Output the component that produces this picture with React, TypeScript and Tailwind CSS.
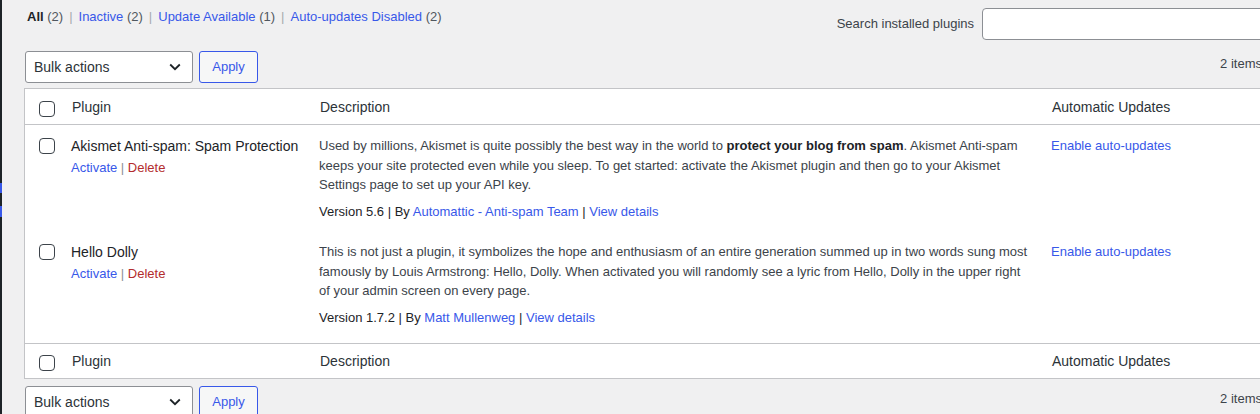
import React from 'react';

const FILTERS = [
  { label: 'All', count: 2, current: true },
  { label: 'Inactive', count: 2 },
  { label: 'Update Available', count: 1 },
  { label: 'Auto-updates Disabled', count: 2 },
];

const PLUGINS = [
  {
    name: 'Akismet Anti-spam: Spam Protection',
    version: '5.6',
    author: 'Automattic - Anti-spam Team',
    height: 'h-[106px]',
    lines: [
      <>
        Used by millions, Akismet is quite possibly the best way in the world to{' '}
        <strong className="font-bold text-[#1d2327]">protect your blog from spam</strong>. Akismet Anti-spam
      </>,
      <>keeps your site protected even while you sleep. To get started: activate the Akismet plugin and then go to your Akismet</>,
      <>Settings page to set up your API key.</>,
    ],
  },
  {
    name: 'Hello Dolly',
    version: '1.7.2',
    author: 'Matt Mullenweg',
    height: 'h-[112px]',
    lines: [
      <>This is not just a plugin, it symbolizes the hope and enthusiasm of an entire generation summed up in two words sung most</>,
      <>famously by Louis Armstrong: Hello, Dolly. When activated you will randomly see a lyric from Hello, Dolly in the upper right</>,
      <>of your admin screen on every page.</>,
    ],
  },
];

const Checkbox = () => (
  <div className="h-[16px] w-[16px] rounded-[4px] border border-[#3c434a] bg-white" />
);

const TableNav = () => (
  <div className="flex h-[32px] items-start">
    <div className="ml-[1px] flex h-[32px] w-[168px] items-center justify-between rounded-[3px] border border-[#8c8f94] bg-white pl-[8px] pr-[11px] text-[14px] text-[#2c3338]">
      <span>Bulk actions</span>
      <svg width="12" height="8" viewBox="0 0 12 8">
        <path d="M1.2 1.5 L6 6.2 L10.8 1.5" stroke="#1d2327" strokeWidth="1.8" fill="none" />
      </svg>
    </div>
    <div className="ml-[6px] flex h-[32px] w-[59px] items-center justify-center rounded-[3px] border border-[#3858e9] bg-[#f6f7f7] text-[13px] text-[#3858e9]">
      Apply
    </div>
    <div className="ml-auto mr-[12px] mt-[3px] leading-[19.5px] text-[#3c434a]">2 items</div>
  </div>
);

const HeadRow = ({ top }: { top: boolean }) => (
  <div className={`flex ${top ? 'h-[36px] border-b' : 'h-[35px] border-t'} border-[#c3c4c7] text-[14px] leading-[20px] text-[#2c3338]`}>
    <div className={`w-[36px] pl-[14px] ${top ? 'pt-[12px]' : 'pt-[11px]'}`}>
      <Checkbox />
    </div>
    <div className={`w-[248px] pl-[11px] ${top ? 'pt-[8px]' : 'pt-[7px]'}`}>Plugin</div>
    <div className={`w-[732px] pl-[11px] ${top ? 'pt-[8px]' : 'pt-[7px]'}`}>Description</div>
    <div className={`flex-1 pl-[11px] ${top ? 'pt-[8px]' : 'pt-[7px]'}`}>Automatic Updates</div>
  </div>
);

export default function App() {
  return (
    <div className="flex h-[414px] w-[1260px] overflow-hidden bg-[#f0f0f1] font-['Liberation_Sans',Arial,sans-serif] text-[13px] text-[#3c434a]">
      {/* admin menu edge */}
      <div className="flex w-[2px] shrink-0 flex-col bg-[#1d2327]">
        <div className="h-[183px] shrink-0" />
        <div className="h-[10px] shrink-0 bg-[#3858e9]" />
        <div className="h-[13px] shrink-0" />
        <div className="h-[11px] shrink-0 bg-[#3858e9]" />
      </div>

      <div className="ml-[22px] w-[1250px] shrink-0">
        {/* Filters + search */}
        <div className="flex h-[40px] items-start justify-between">
          <ul className="ml-[3px] flex pt-[7px] leading-[19.5px]">
            {FILTERS.map((f, i) => (
              <li key={f.label} className="flex">
                <span className={f.current ? 'font-bold text-[#1d2327]' : 'text-[#3858e9]'}>{f.label}</span>
                <span className="ml-[3.6px] text-[#50575e]">({f.count})</span>
                {i < FILTERS.length - 1 && <span className="mx-[6px] text-[#a7aaad]">|</span>}
              </li>
            ))}
          </ul>
          <div className="flex items-center pt-[8px]">
            <span className="mr-[8px] text-[#3c434a]">Search installed plugins</span>
            <div className="h-[32px] w-[292px] rounded-[4px] border border-[#8c8f94] bg-white" />
          </div>
        </div>

        <div className="mt-[11px]">
          <TableNav />
        </div>

        {/* Plugins table */}
        <div className="mt-[5px] border border-[#c3c4c7] bg-white">
          <HeadRow top />
          {PLUGINS.map((p) => (
            <div key={p.name} className={`flex ${p.height}`}>
              <div className="w-[36px] pl-[14px] pt-[13px]">
                <Checkbox />
              </div>
              <div className="w-[248px] pl-[10px] pt-[11px]">
                <div className="text-[14px] leading-[20px] text-[#1d2327]">{p.name}</div>
                <div className="mt-[2px] leading-[19.5px]">
                  <span className="text-[#3858e9]">Activate</span>
                  <span className="text-[#8c8f94]"> | </span>
                  <span className="text-[#b32d2e]">Delete</span>
                </div>
              </div>
              <div className="w-[732px] pl-[10px] pt-[11px] leading-[19.5px]">
                <p className="whitespace-nowrap">
                  {p.lines.map((l, i) => (
                    <React.Fragment key={i}>
                      {l}
                      {i < p.lines.length - 1 && <br />}
                    </React.Fragment>
                  ))}
                </p>
                <p className="mt-[7px] text-[#1d2327]">
                  Version {p.version} | By <span className="text-[#3858e9]">{p.author}</span> |{' '}
                  <span className="text-[#3858e9]">View details</span>
                </p>
              </div>
              <div className="flex-1 pl-[10px] pt-[11px] leading-[19.5px] text-[#3858e9]">Enable auto-updates</div>
            </div>
          ))}
          <HeadRow top={false} />
        </div>

        <div className="mt-[7px]">
          <TableNav />
        </div>
      </div>
    </div>
  );
}
